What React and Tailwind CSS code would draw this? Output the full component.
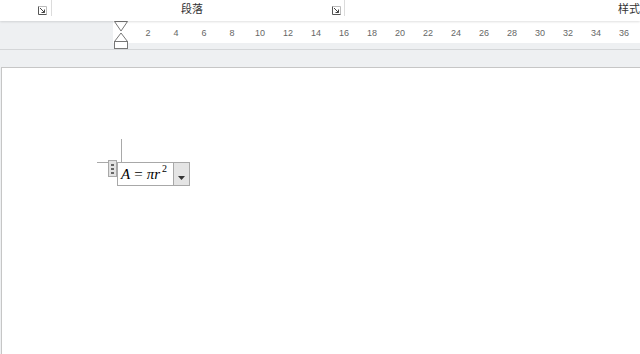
import React from 'react';

const Launcher = () => (
  <svg width="9" height="9" viewBox="0 0 9 9" className="block">
    <path d="M0.5 0.5 H8.5 V8.5" fill="none" stroke="#bdbdbd" />
    <path d="M0.5 0.5 V8.5 H8.5" fill="none" stroke="#555" />
    <path d="M2 2 L6.5 6.5 M6.5 3.5 V6.5 H3.5" fill="none" stroke="#444" />
  </svg>
);

const IndentMarker = () => (
  <svg width="16" height="29" viewBox="0 0 16 29" className="block">
    <path d="M1.5 0.5 H14.5 L8 10 Z" fill="#fff" stroke="#777" />
    <path d="M8 12 L14.5 20.5 H1.5 Z" fill="#fff" stroke="#777" />
    <rect x="1.5" y="20.5" width="13" height="7" fill="#fff" stroke="#777" />
  </svg>
);

const App = () => {
  const nums = Array.from({ length: 18 }, (_, i) => (i + 1) * 2);

  return (
    <div className="w-[640px] h-[354px] overflow-hidden bg-[#eef0f2] flex flex-col" style={{ fontFamily: '"Liberation Sans", "Noto Sans CJK SC", sans-serif' }}>
      {/* Ribbon group labels */}
      <div className="h-[21px] shrink-0 bg-white flex items-start shadow-[0_1px_2px_rgba(0,0,0,0.12)] relative z-10">
        <div className="w-[38px]" />
        <div className="pt-[6px]"><Launcher /></div>
        <div className="w-[4px]" />
        <div className="w-px h-[16px] bg-[#dcdcdc]" />
        <div className="w-[280px] text-center text-[11px] leading-none pt-[4px] text-[#333]">段落</div>
        <div className="pt-[6px]"><Launcher /></div>
        <div className="w-[3px]" />
        <div className="w-px h-[16px] bg-[#dcdcdc]" />
        <div className="flex-1 text-right text-[11px] leading-none pt-[4px] text-[#333] whitespace-nowrap">样式</div>
      </div>

      {/* Ruler */}
      <div className="h-[29px] shrink-0 flex border-b border-[#d4d6d8] relative">
        <div className="w-[113px] shrink-0" />
        <div className="flex-1 flex flex-col">
          <div className="h-[22px] bg-white flex items-center pt-[3px] text-[9px] text-[#666] leading-none">
            <div className="w-[21px] shrink-0" />
            {nums.map((n) => (
              <div key={n} className="w-[28px] shrink-0 text-center">{n}</div>
            ))}
          </div>
        </div>
        <div className="absolute left-[113px] top-0">
          <IndentMarker />
        </div>
      </div>

      <div className="h-[17px] shrink-0" />

      {/* Page */}
      <div className="flex-1 ml-px bg-white border-l border-t border-[#c6c6c6]">
        <div className="pt-[71px] pl-[95px] flex flex-col">
          {/* margin corner marks */}
          <div className="ml-[24px] w-px h-[23px] bg-[#a9a9a9]" />
          <div className="flex items-start">
            <div className="w-[11px] h-px bg-[#a9a9a9]" />
            <div className="flex items-start -mt-[2px]">
              <div className="w-[9px] h-[17px] bg-[#e2e2e2] border border-[#a8a8a8] flex flex-col items-center justify-center gap-[2px]">
                <div className="w-[3px] h-[2px] bg-[#666]" />
                <div className="w-[3px] h-[2px] bg-[#666]" />
                <div className="w-[3px] h-[2px] bg-[#666]" />
              </div>
              <div className="flex border border-[#a8a8a8] h-[24px] mt-[2px] bg-white">
                <div className="w-[55px] flex items-center pl-[3px] text-[15px] font-normal text-black whitespace-nowrap" style={{ fontFamily: '"Liberation Serif", serif' }}>
                  <i>A</i>
                  <span className="mx-[4px]">=</span>
                  <i>πr</i>
                  <sup className="text-[10px] ml-[2px] -top-[5px]">2</sup>
                </div>
                <div className="w-[16px] bg-[#e4e4e4] border-l border-[#a8a8a8] flex items-end justify-center pb-[5px]">
                  <svg width="7" height="4" viewBox="0 0 7 4"><path d="M0 0 H7 L3.5 4 Z" fill="#333" /></svg>
                </div>
              </div>
            </div>
          </div>
        </div>
      </div>
    </div>
  );
};

export default App;
